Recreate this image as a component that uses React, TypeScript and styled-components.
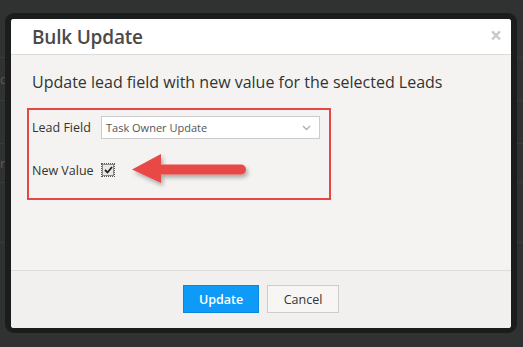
import React from "react";
import styled, { createGlobalStyle } from "styled-components";

const Global = createGlobalStyle`
  html, body { margin: 0; padding: 0; }
  body {
    background: #303231;
    font-family: "Open Sans", "Noto Sans", sans-serif;
    width: 523px;
    height: 347px;
    overflow: hidden;
  }
`;

const Page = styled.div`
  position: relative;
  width: 523px;
  height: 347px;
  overflow: hidden;
`;

const Backdrop = styled.div`
  display: flex;
  flex-direction: column;
  padding-top: 57px;
`;

const BgRow = styled.div<{ $h: number }>`
  height: ${(p) => p.$h}px;
  border-top: 1px solid #3a3c3b;
  color: #5a5c5b;
  font-size: 13px;
  display: flex;
  align-items: center;
  box-sizing: border-box;
`;

const Overlay = styled.div`
  position: absolute;
  inset: 0;
  display: flex;
  align-items: flex-start;
  padding: 13px 0 0 5px;
`;

const Frame = styled.div`
  width: 512px;
  height: 320px;
  box-sizing: border-box;
  background: #1b1c1c;
  border-radius: 9px;
  padding: 6px;
`;

const Modal = styled.div`
  width: 500px;
  height: 309px;
  border-radius: 3px;
  overflow: hidden;
  display: flex;
  flex-direction: column;
  background: #f4f3f1;
`;

const Header = styled.div`
  height: 35px;
  background: #ffffff;
  border-bottom: 1px solid #dcdcdc;
  display: flex;
  align-items: center;
  justify-content: space-between;
  padding: 0 9px 0 21px;
`;

const Title = styled.h4`
  margin: 0;
  font-size: 19px;
  font-weight: 600;
  color: #4a4a4a;
  letter-spacing: -0.2px;
`;

const Close = styled.span`
  font-size: 21px;
  font-weight: 700;
  color: #c9c9c9;
  line-height: 1;
  margin-top: -2px;
`;

const Body = styled.div`
  flex: 1;
  padding: 16px 0 0 21px;
  display: flex;
  flex-direction: column;
  background: #f4f3f1;
`;

const Lead = styled.p`
  margin: 0;
  font-size: 16px;
  color: #333;
  line-height: 22px;
`;

const Highlight = styled.div`
  margin: 15px 0 0 -5px;
  width: 304px;
  height: 92px;
  box-sizing: border-box;
  border: 2px solid #e34846;
  padding: 6px 9px 0 3px;
  display: flex;
  flex-direction: column;
`;

const Row = styled.div<{ $mt?: number }>`
  display: flex;
  align-items: center;
  margin-top: ${(p) => p.$mt ?? 0}px;
`;

const Label = styled.label`
  width: 69px;
  font-size: 12.5px;
  color: #333;
`;

const Select = styled.div`
  flex: 1;
  height: 23px;
  box-sizing: border-box;
  background: #fff;
  border: 1px solid #cccccc;
  display: flex;
  align-items: center;
  justify-content: space-between;
  padding: 0 8px 0 4px;
  font-size: 11px;
  color: #555;
`;

const Check = styled.span`
  width: 12px;
  height: 12px;
  box-sizing: border-box;
  margin-left: 1px;
  outline: 1px dotted #555;
  outline-offset: 0;
  border: 1px solid #8a8a8a;
  background: #e8e8e8;
  display: flex;
  align-items: center;
  justify-content: center;
`;

const Arrow = styled.svg`
  margin-left: 18px;
  overflow: visible;
`;

const Footer = styled.div`
  height: 58px;
  border-top: 1px solid #dcdcdc;
  background: #f1f0ee;
  display: flex;
  justify-content: center;
  align-items: flex-start;
  padding-top: 14px;
  box-sizing: border-box;
  gap: 8px;
`;

const Button = styled.button<{ $primary?: boolean }>`
  height: 28px;
  width: ${(p) => (p.$primary ? 76 : 72)}px;
  box-sizing: border-box;
  border: 1px solid ${(p) => (p.$primary ? "#0a88e0" : "#cfccc6")};
  background: ${(p) => (p.$primary ? "#0e9bf8" : "#f7f6f4")};
  color: ${(p) => (p.$primary ? "#fff" : "#333")};
  font-family: "Open Sans", sans-serif;
  font-size: 12.5px;
  font-weight: ${(p) => (p.$primary ? 600 : 400)};
  padding: 0;
  border-radius: 0;
`;

export default function App() {
  return (
    <Page>
      <Global />
      <Backdrop>
        <BgRow $h={43}>d s</BgRow>
        <BgRow $h={43} />
        <BgRow $h={39}>re</BgRow>
        <BgRow $h={60} />
        <BgRow $h={60} />
      </Backdrop>
      <Overlay>
        <Frame>
          <Modal>
            <Header>
              <Title>Bulk Update</Title>
              <Close>×</Close>
            </Header>
            <Body>
              <Lead>Update lead field with new value for the selected Leads</Lead>
              <Highlight>
                <Row>
                  <Label>Lead Field</Label>
                  <Select>
                    <span>Task Owner Update</span>
                    <svg width="9" height="6" viewBox="0 0 9 6">
                      <path d="M1 1 L4.5 4.5 L8 1" fill="none" stroke="#b0b0b0" strokeWidth="1.4" />
                    </svg>
                  </Select>
                </Row>
                <Row $mt={15}>
                  <Label>New Value</Label>
                  <Check>
                    <svg width="9" height="8" viewBox="0 0 9 8">
                      <path d="M1 4 L3.5 6.5 L8 1" fill="none" stroke="#222" strokeWidth="1.8" />
                    </svg>
                  </Check>
                  <Arrow width="116" height="32" viewBox="0 0 116 32">
                    <defs>
                      <filter id="sh" x="-20%" y="-50%" width="140%" height="200%">
                        <feDropShadow dx="2" dy="3" stdDeviation="2" floodColor="#000" floodOpacity="0.3" />
                      </filter>
                    </defs>
                    <g filter="url(#sh)">
                      <path d="M0 15.5 L29 0 L29 29 Z" fill="#e84a47" />
                      <path d="M27 10.5 L109 10.5 A5 5 0 0 1 109 20.5 L27 20.5 Z" fill="#e84a47" />
                    </g>
                  </Arrow>
                </Row>
              </Highlight>
            </Body>
            <Footer>
              <Button $primary>Update</Button>
              <Button>Cancel</Button>
            </Footer>
          </Modal>
        </Frame>
      </Overlay>
    </Page>
  );
}
